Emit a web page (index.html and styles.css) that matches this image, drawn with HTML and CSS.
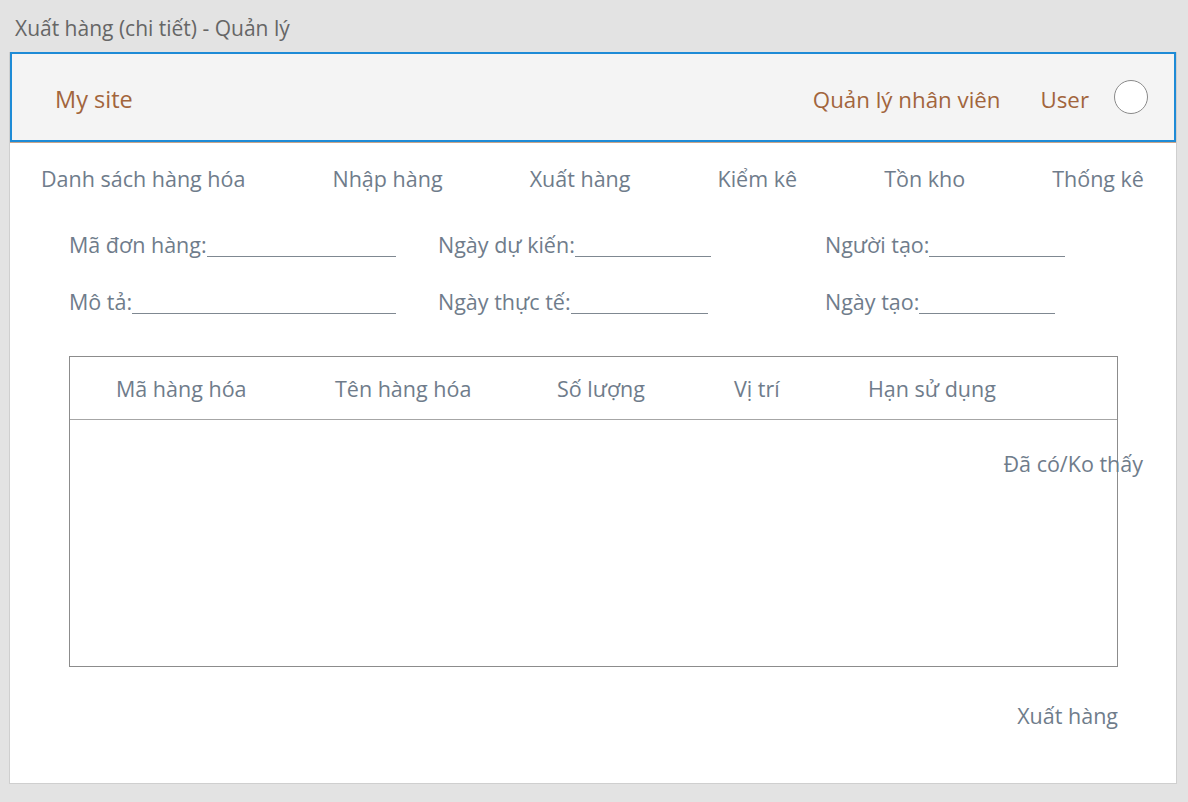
FILE: index.html
```html
<!DOCTYPE html>
<html lang="vi">
<head>
<meta charset="utf-8">
<title>Xuất hàng (chi tiết) - Quản lý</title>
<link rel="stylesheet" href="styles.css">
</head>
<body>
<div class="title">Xuất hàng (chi tiết) - Quản lý</div>
<div class="window">
  <header class="header">
    <div class="brand">My site</div>
    <div class="header-right">
      <span class="hlink">Quản lý nhân viên</span>
      <span class="hlink user">User</span>
      <span class="avatar"></span>
    </div>
  </header>
  <div class="header-line"></div>
  <nav class="nav">
    <span>Danh sách hàng hóa</span>
    <span>Nhập hàng</span>
    <span>Xuất hàng</span>
    <span>Kiểm kê</span>
    <span>Tồn kho</span>
    <span>Thống kê</span>
  </nav>
  <div class="form">
    <div class="field f327"><span class="label">Mã đơn hàng:</span><span class="line"></span></div>
    <div class="field f273"><span class="label">Ngày dự kiến:</span><span class="line"></span></div>
    <div class="field f240"><span class="label">Người tạo:</span><span class="line"></span></div>
    <div class="field f327"><span class="label">Mô tả:</span><span class="line"></span></div>
    <div class="field f270"><span class="label">Ngày thực tế:</span><span class="line"></span></div>
    <div class="field f230"><span class="label">Ngày tạo:</span><span class="line"></span></div>
  </div>
  <div class="table">
    <div class="thead">
      <span>Mã hàng hóa</span>
      <span>Tên hàng hóa</span>
      <span>Số lượng</span>
      <span>Vị trí</span>
      <span>Hạn sử dụng</span>
    </div>
    <div class="tbody">
      <span class="status">Đã có/Ko thấy</span>
    </div>
  </div>
  <div class="actions"><span class="btn">Xuất hàng</span></div>
</div>
</body>
</html>
```
FILE: styles.css
```css
* { box-sizing: border-box; }
html, body { margin: 0; padding: 0; }
body {
  background: #e3e3e3;
  font-family: "Open Sans", "Noto Sans", sans-serif;
  width: 1188px;
  height: 802px;
  overflow: hidden;
}
.title {
  height: 52px;
  padding: 14px 0 0 15px;
  font-size: 21px;
  color: #666666;
  line-height: 28px;
}
.window {
  margin-left: 9px;
  width: 1168px;
  height: 732px;
  background: #ffffff;
  border: 1px solid #cfcfcf;
  border-top: 0;
  display: flex;
  flex-direction: column;
}
.header {
  height: 90px;
  background: #f4f4f4;
  border: 2px solid #1e8bd6;
  display: flex;
  align-items: center;
  justify-content: space-between;
  padding: 4px 26px 0 43px;
}
.header-line { height: 1px; background: #c9a48a; }
.brand { font-size: 23.5px; color: #a2653c; }
.header-right { display: flex; align-items: center; }
.hlink { font-size: 22.3px; color: #a2653c; }
.user { margin-left: 40px; }
.avatar {
  width: 34px; height: 34px;
  border: 1px solid #8a8a8a;
  border-radius: 50%;
  background: #fff;
  margin-left: 25px;
  margin-top: -4px;
}
.nav {
  display: flex;
  justify-content: space-between;
  padding: 21px 32px 0 31px;
  height: 70px;
  font-size: 21.5px;
  color: #6f7c8b;
  line-height: 30px;
}
.form {
  display: grid;
  grid-template-columns: 369px 387px auto;
  row-gap: 27px;
  padding: 17px 0 0 59px;
  font-size: 21.5px;
  color: #6f7c8b;
  line-height: 30px;
}
.field { display: flex; align-items: flex-end; }
.f327 { width: 327px; }
.f273 { width: 273px; }
.f270 { width: 270px; }
.f240 { width: 240px; }
.f230 { width: 230px; }
.line { flex: 1; border-bottom: 1px solid #7f8891; height: 1px; margin-bottom: 3px; }
.table {
  margin: 39px 0 0 59px;
  width: 1049px;
  height: 311px;
  border: 1px solid #8c8c8c;
  display: flex;
  flex-direction: column;
}
.thead {
  height: 63px;
  border-bottom: 1px solid #a6a6a6;
  display: grid;
  grid-template-columns: 219px 222px 177px 134px auto;
  align-items: center;
  padding-left: 46px;
  font-size: 21.5px;
  color: #6f7c8b;
}
.tbody {
  flex: 1;
  display: flex;
  justify-content: flex-end;
  align-items: flex-start;
  padding-top: 29px;
}
.status {
  font-size: 21.5px;
  color: #6f7c8b;
  line-height: 30px;
  margin-right: -26px;
}
.actions {
  display: flex;
  justify-content: flex-end;
  width: 1108px;
  margin-top: 34px;
}
.btn { font-size: 21.5px; color: #6f7c8b; line-height: 30px; }
```
